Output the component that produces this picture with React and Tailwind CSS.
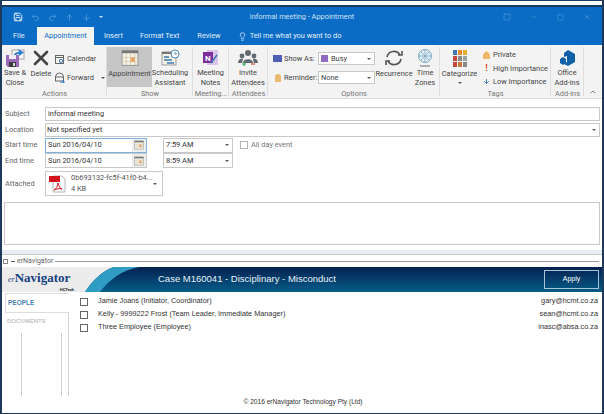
// Outlook appointment window with the erNavigator pane underneath
import { ChevronUp, Minus, Square, X, Lightbulb, ArrowUp, ArrowDown, Undo2, Redo2, Save } from "lucide-react";

function Caret({ className = "" }) {
  return <span className={"inline-block shrink-0 w-0 h-0 border-x-[2px] border-t-[2px] border-x-transparent border-t-[#555] " + className} />;
}

function Group({ width, label, children }) {
  return (
    <div className="flex flex-col shrink-0 h-full relative" style={{ width }}>
      <div className="h-[40px] flex">{children}</div>
      <div className="mt-[2px] h-[10px] text-[7.4px] leading-[10px] text-[#777] text-center whitespace-nowrap">{label}</div>
      <span className="absolute right-0 top-0 bottom-[2px] w-px bg-[#dedede]" />
    </div>
  );
}

function BigButton({ icon, lines, active, width }) {
  return (
    <div className={"flex flex-col items-center shrink-0 text-[7.4px] leading-[9.5px] text-[#444] text-center " + (active ? "bg-[#c6c6c6]" : "")} style={{ width }}>
      <div className="h-[22px] flex items-center justify-center">{icon}</div>
      <div className="whitespace-nowrap">
        {lines.map((l) => <div key={l}>{l}</div>)}
      </div>
    </div>
  );
}

function SaveIcon() {
  return (
    <svg width="20" height="20" viewBox="0 0 20 20">
      <rect x="7" y="2" width="12" height="9" fill="#f7f7f7" stroke="#a5a5a5" />
      <path d="M8 9 C9 5 11 4 14 4 L13 1 L19 4.5 L14 8 L14 6 C12 6 10 7 8 9Z" fill="#2b7cd3" />
      <path d="M1 7h13v12H3l-2-2z" fill="#9a6ab8" />
      <rect x="4" y="7" width="7" height="4" fill="#f3eef7" />
      <rect x="4" y="14" width="7" height="5" fill="#3c3c3c" />
      <rect x="8" y="15" width="2" height="3" fill="#ddd" />
    </svg>
  );
}

function CalendarIcon({ size = 17 }) {
  return (
    <svg width={size} height={size} viewBox="0 0 17 17" className="shrink-0">
      <rect x="1" y="1.5" width="15" height="14" fill="#f5f2e8" stroke="#9a9a9a" />
      <rect x="1" y="1.5" width="15" height="2.5" fill="#777" />
      <path d="M1 8h15M1 12h15M5 4v11M9 4v11M13 4v11" stroke="#d6c9a8" strokeWidth=".8" />
      <rect x="9" y="8" width="4" height="4" fill="#e8a06a" />
    </svg>
  );
}

function SmallCalendar() {
  return (
    <svg width="10" height="10" viewBox="0 0 10 10" className="shrink-0" fill="none" stroke="#666">
      <rect x=".5" y="1.5" width="8" height="8" />
      <path d="M.5 3.5h8" />
      <circle cx="6" cy="7" r="1.6" stroke="#3d7ab5" />
    </svg>
  );
}

function ForwardIcon() {
  return (
    <svg width="10" height="11" viewBox="0 0 10 11" className="shrink-0" fill="none" stroke="#666">
      <path d="M.5 5a4 4 0 0 1 8 0" />
      <rect x=".5" y="5" width="8" height="4" />
      <path d="M5 10h4M7.5 8.5 9.5 10l-2 1" stroke="#2b7cd3" />
    </svg>
  );
}

function SchedulingIcon() {
  return (
    <svg width="19" height="17" viewBox="0 0 19 17">
      <rect x="1" y="3" width="14" height="13" fill="#f7f2e6" stroke="#9a9a9a" />
      <rect x="1" y="3" width="14" height="2" fill="#777" />
      <path d="M3 8h5M3 11h8M6 14h7" stroke="#3d7ab5" strokeWidth="1.4" />
      <circle cx="14" cy="5" r="4" fill="#fff" stroke="#4a86b8" />
      <path d="M14 3v2h2" stroke="#4a86b8" fill="none" />
    </svg>
  );
}

function PdfIcon() {
  return (
    <svg width="17" height="18" viewBox="0 0 17 18" className="shrink-0">
      <path d="M4 1h9l3 3v13H4z" fill="#fff" stroke="#b5b5b5" />
      <rect x="0" y="1" width="11" height="6" fill="#d2141c" />
      <path d="M9 8c0 3-2 6-4 7 2-1 6-2 8-1-2 0-3-3-4-6z" fill="none" stroke="#d2141c" />
    </svg>
  );
}

function FormRow({ label, children, className = "" }) {
  return (
    <div className={"flex items-center " + className}>
      <div className="w-[43px] pl-[3px] shrink-0 text-[7.4px] text-[#666]">{label}</div>
      {children}
    </div>
  );
}

function DateField({ active }) {
  return (
    <div className={"w-[102px] h-[15px] flex items-center justify-between border pl-[2px] text-[7.4px] text-[#333] " + (active ? "border-[#7fb2df]" : "border-[#c8c8c8]")}>
      Sun 2016/04/10
      <div className="h-full flex items-center px-[2px] bg-[#eeeeee]"><CalendarIcon size={10} /></div>
    </div>
  );
}

function TimeField({ value }) {
  return (
    <div className="ml-[16px] w-[70px] h-[15px] flex items-center justify-between border border-[#c8c8c8] pl-[2px] pr-[3px] text-[7.4px] text-[#333]">
      {value}
      <Caret />
    </div>
  );
}

const people = [
  ["Jamie Joans (Initiator, Coordinator)", "gary@hcmt.co.za"],
  ["Kelly - 9999222 Frost (Team Leader, Immediate Manager)", "sean@hcmt.co.za"],
  ["Three Employee (Employee)", "inasc@absa.co.za"],
];

export default function App() {
  return (
    <div className="w-[604px] h-[414px] bg-white overflow-hidden flex flex-col font-['Roboto',sans-serif] border-l-2 border-r-2 border-b border-[#1d3a5a]">
      <div className="h-[7px] shrink-0 border-t border-[#1d3a5a] border-b-2 border-b-[#1d3a5a] bg-white" />

      {/* title bar */}
      <div className="h-[20px] shrink-0 bg-[#0a6cc4] flex items-center">
        <div className="w-[108px] flex items-center gap-[8px] pl-[11px]">
          <Save size={10} className="text-white" />
          <Undo2 size={9} className="text-[#5b9fdb]" />
          <Redo2 size={9} className="text-[#5b9fdb]" />
          <ArrowUp size={9} className="text-[#5b9fdb]" />
          <ArrowDown size={9} className="text-[#5b9fdb]" />
          <Caret className="border-t-[#cfe3f5]" />
        </div>
        <div className="flex-1 text-center text-[7.4px] text-[#cfe3f5] whitespace-nowrap">informal meeting - Appointment</div>
        <div className="w-[108px] pl-[9px] flex items-center gap-[19px] text-[#4f97d8]">
          <Square size={8} />
          <Minus size={8} />
          <Square size={7} />
          <X size={8} />
        </div>
      </div>

      {/* tabs */}
      <div className="h-[18px] shrink-0 bg-[#0a6cc4] flex items-end text-[7.4px] text-[#e4f0fa]">
        <div className="w-[35px] h-full flex items-center pl-[11px]">File</div>
        <div className="w-[57px] h-full flex items-center justify-center bg-[#f3f3f3] text-[#0a6cc4]">Appointment</div>
        <div className="ml-[10px] h-full flex items-center">Insert</div>
        <div className="ml-[17px] h-full flex items-center">Format Text</div>
        <div className="ml-[18px] h-full flex items-center">Review</div>
        <div className="ml-[17px] h-full flex items-center gap-[3px]">
          <Lightbulb size={9} />
          Tell me what you want to do
        </div>
      </div>

      {/* ribbon */}
      <div className="h-[54px] shrink-0 pt-[2px] bg-[#f3f3f3] border-b border-[#dcdcdc] flex items-stretch">
        <Group width={105} label="Actions">
          <BigButton width={26} lines={["Save &", "Close"]} icon={<SaveIcon />} />
          <BigButton width={26} lines={["Delete"]} icon={<X size={24} strokeWidth={2.6} className="text-[#444]" />} />
          <div className="flex flex-col gap-[8px] pt-[6px] pl-[1px] text-[7.4px] leading-[11px] text-[#444]">
            <div className="flex items-center gap-[2px]"><SmallCalendar />Calendar</div>
            <div className="flex items-center gap-[2px] whitespace-nowrap"><ForwardIcon />Forward<Caret className="ml-[5px]" /></div>
          </div>
        </Group>
        <Group width={86} label="Show">
          <BigButton width={45} active lines={["Appointment"]} icon={<CalendarIcon size={18} />} />
          <BigButton width={36} lines={["Scheduling", "Assistant"]} icon={<SchedulingIcon />} />
        </Group>
        <Group width={36} label="Meeting...">
          <BigButton width={35} lines={["Meeting", "Notes"]} icon={
            <svg width="17" height="17" viewBox="0 0 17 17">
              <rect x="5" y="1" width="11" height="15" fill="#d9c4ea" />
              <rect x="1" y="3" width="10" height="11" fill="#7a2f9a" />
              <text x="3" y="12" fontSize="8" fontWeight="700" fill="#fff">N</text>
              <path d="M9 14 15 6" stroke="#3d7ab5" strokeWidth="1.5" />
            </svg>
          } />
        </Group>
        <Group width={39} label="Attendees">
          <BigButton width={38} lines={["Invite", "Attendees"]} icon={
            <svg width="20" height="17" viewBox="0 0 20 17" fill="#5f6b70">
              <circle cx="10" cy="4" r="3" />
              <circle cx="4" cy="7" r="2.4" />
              <circle cx="16" cy="7" r="2.4" />
              <path d="M5 14c0-5 10-5 10 0zM0 14c0-4 3-5 5-4l-1 4zM20 14c0-4-3-5-5-4l1 4z" />
              <path d="M4 15h4M6 13v4" stroke="#3aa655" strokeWidth="1.2" />
              <path d="M13 15h4" stroke="#c8452c" strokeWidth="1.2" />
            </svg>
          } />
        </Group>
        <Group width={172} label="Options">
          <div className="flex flex-col gap-[6px] pt-[5px] pl-[5px] text-[7.4px] text-[#444] w-[108px] shrink-0">
            <div className="flex items-center whitespace-nowrap">
              <span className="w-[9px] h-[7px] mr-[2px] bg-[#4c5fb5]" />
              <span className="w-[34px]">Show As:</span>
              <div className="w-[57px] h-[13px] bg-white border border-[#c8c8c8] flex items-center justify-between pl-[2px] pr-[3px]">
                <span className="flex items-center gap-[3px]"><span className="w-[7px] h-[7px] bg-[#8e6cc4]" />Busy</span>
                <Caret />
              </div>
            </div>
            <div className="flex items-center whitespace-nowrap">
              <span className="w-[6px] h-[8px] ml-[2px] mr-[3px] rounded-t-full bg-[#e9b872]" />
              <span className="w-[34px]">Reminder:</span>
              <div className="w-[57px] h-[13px] bg-white border border-[#c8c8c8] flex items-center justify-between pl-[2px] pr-[3px]">
                None
                <Caret />
              </div>
            </div>
          </div>
          <BigButton width={36} lines={["Recurrence"]} icon={
            <svg width="20" height="18" viewBox="0 0 20 18" fill="none" stroke="#555" strokeWidth="1.6">
              <path d="M3 8a7 7 0 0 1 13-2M17 10a7 7 0 0 1-13 2" />
              <path d="M14 6h4V2M6 12H2v4" />
            </svg>
          } />
          <BigButton width={26} lines={["Time", "Zones"]} icon={
            <svg width="16" height="20" viewBox="0 0 16 20" fill="none" stroke="#7aa6c4">
              <circle cx="8" cy="8" r="6.5" fill="#dfeaf2" />
              <path d="M2 8h12M8 2v12M4 4l8 8M12 4l-8 8" strokeWidth=".7" />
              <path d="M3 18h10" stroke="#999" strokeWidth="1.5" />
            </svg>
          } />
        </Group>
        <Group width={111} label="Tags">
          <div className="w-[39px] flex flex-col items-center text-[7.4px] leading-[9.5px] text-[#444]">
            <svg width="14" height="17" viewBox="0 0 14 17" className="mt-[3px] mb-[2px]">
              <rect x="0" y="0" width="4" height="5" fill="#3e79b5" />
              <rect x="5" y="0" width="4" height="5" fill="#e8892c" />
              <rect x="10" y="0" width="4" height="5" fill="#e8b02c" />
              <rect x="0" y="6" width="4" height="5" fill="#c44a3a" />
              <rect x="5" y="6" width="4" height="5" fill="#8a8a8a" />
              <rect x="10" y="6" width="4" height="5" fill="#9aa5a8" />
              <rect x="0" y="12" width="4" height="5" fill="#c44a3a" />
              <rect x="5" y="12" width="4" height="5" fill="#c47a3a" />
              <rect x="10" y="12" width="4" height="5" fill="#8a8a8a" />
            </svg>
            Categorize
            <Caret className="mt-[3px]" />
          </div>
          <div className="flex flex-col gap-[2.5px] pt-[2px] pl-[4px] text-[7.4px] leading-[11px] text-[#444] whitespace-nowrap">
            <div className="flex items-center gap-[3px]">
              <svg width="7" height="8" viewBox="0 0 7 8" fill="#eeb868"><path d="M0 3h1a2.5 2.5 0 0 1 5 0h1v5H0z" /></svg>
              Private
            </div>
            <div className="flex items-center gap-[3px]"><span className="w-[7px] text-center text-[9px] font-bold text-[#d8492c]">!</span>High Importance</div>
            <div className="flex items-center gap-[3px]"><ArrowDown size={7} strokeWidth={3} className="text-[#2b6cb0]" />Low Importance</div>
          </div>
        </Group>
        <Group width={33} label="Add-ins">
          <BigButton width={32} lines={["Office", "Add-ins"]} icon={
            <svg width="17" height="18" viewBox="0 0 17 18" fill="#0f5fa8">
              <path d="M9 1l7 4v8l-7 4-4-2 3-2V7L5 8V4z" />
              <path d="M1 10l3-2 3 2v4l-3 2-3-2z" />
            </svg>
          } />
        </Group>
        <div className="flex-1 flex items-end justify-center pb-[2px]"><ChevronUp size={8} className="text-[#555]" /></div>
      </div>

      {/* appointment form */}
      <div className="shrink-0 pt-[7px] pr-[2px] flex flex-col">
        <FormRow label="Subject" className="h-[16px]">
          <div className="flex-1 h-[14px] border border-[#c8c8c8] pl-[2px] text-[7.4px] leading-[12px] text-[#333]">informal meeting</div>
        </FormRow>
        <FormRow label="Location" className="h-[15px]">
          <div className="flex-1 h-[14px] border border-[#c8c8c8] pl-[1px] pr-[3px] text-[7.4px] leading-[12px] text-[#333] flex items-center justify-between">
            Not specified yet
            <Caret />
          </div>
        </FormRow>
        <FormRow label="Start time" className="h-[16px]">
          <DateField active />
          <TimeField value="7:59 AM" />
          <span className="ml-[7px] w-[8px] h-[8px] border border-[#b5b5b5]" />
          <span className="ml-[3px] text-[7.4px] text-[#777]">All day event</span>
        </FormRow>
        <FormRow label="End time" className="h-[15px]">
          <DateField />
          <TimeField value="8:59 AM" />
        </FormRow>
        <FormRow label="Attached" className="h-[25px] mt-[3px]">
          <div className="w-[118px] h-[25px] border border-[#c8c8c8] flex items-center pl-[3px] pr-[7px] text-[7.4px] leading-[10.5px] text-[#555]">
            <PdfIcon />
            <div className="ml-[5px] flex-1 whitespace-nowrap">
              <div>0b693132-fc5f-41f0-b4...</div>
              <div>4 KB</div>
            </div>
            <Caret />
          </div>
        </FormRow>
      </div>

      {/* message body */}
      <div className="shrink-0 h-[43px] mt-[6px] ml-[2px] mr-[2px] border border-[#c8c8c8]" />

      {/* splitter */}
      <div className="shrink-0 h-[5px] mt-[5px] bg-[#e6ecf1] border-b border-[#c4ccd2]" />

      {/* erNavigator pane */}
      <div className="shrink-0 h-[12px] flex items-center pl-[1px] pr-[3px] text-[7px] text-[#666]">
        <span className="w-[5px] h-[5px] border border-[#888] mr-[3px]" />
        <span className="w-[4px] h-px bg-[#666] mr-[2px]" />
        erNavigator
        <span className="flex-1 h-px bg-[#999] ml-[2px]" />
      </div>
      <div className="relative shrink-0 h-[25px] flex items-stretch bg-gradient-to-b from-[#04214f] to-[#075d8a]">
        {/* swoosh behind the logo */}
        <svg width="170" height="25" viewBox="0 0 170 25" className="absolute left-0 top-0">
          <path d="M0 0H112C100 4 90 14 83 25H0Z" fill="#ececec" />
          <path d="M112 0H138C120 3 108 12 98 25H83C90 14 100 4 112 0Z" fill="#2f9cc4" />
        </svg>
        <div className="relative w-[84px] pl-[6px] pt-[4px] flex flex-col">
          <div className="text-[13px] leading-[13px] font-bold text-[#17417f] whitespace-nowrap font-['Liberation_Serif',serif]"><span className="text-[8px] italic font-normal">er</span>Navigator</div>
          <div className="mt-[1px] text-right pr-[12px] text-[4px] leading-[5px] font-bold text-[#222]">HCTech</div>
        </div>
        <div className="relative flex-1 pl-[72px] flex items-center text-[9.5px] text-[#e8f1f7] font-['Liberation_Sans',sans-serif] whitespace-nowrap">Case M160041 - Disciplinary - Misconduct</div>
        <div className="relative my-[3px] mr-[3px] w-[55px] border border-[#a9c4d6] flex items-center justify-center text-[7px] text-white font-['Liberation_Sans',sans-serif]">Apply</div>
      </div>
      <div className="flex-1 flex font-['Liberation_Sans',sans-serif] text-[7.3px] text-[#333] min-h-0">
        <div className="w-[67px] shrink-0 flex flex-col pb-[17px] relative">
          <div className="ml-[3px] mt-[1px] h-[20px] border-y border-l border-r-0 border-[#ddd] pl-[2px] flex items-center text-[6.5px] font-bold text-[#4a7fb5]">PEOPLE</div>
          <div className="flex-1 border-r border-[#d0d0d0] flex flex-col">
            <div className="ml-[5px] h-[15px] pt-[2px] flex items-center text-[6px] font-bold text-[#c4c4c4]">DOCUMENTS</div>
            <div className="flex-1 mt-[5px] ml-[19px] mr-[6px] border-x border-[#d0d0d0]" />
          </div>
        </div>
        <div className="flex-1 pl-[11px] pr-[4px] pt-[3px] min-w-0">
          {people.map(([name, mail]) => (
            <div key={mail} className="h-[13px] flex items-center">
              <span className="w-[8px] h-[8px] border border-[#666] mr-[10px]" />
              <span className="flex-1">{name}</span>
              <span>{mail}</span>
            </div>
          ))}
        </div>
      </div>
      <div className="shrink-0 h-[16px] pb-[7px] -mt-[16px] flex items-center justify-center pl-[2px] text-[6.6px] text-[#333] font-['Liberation_Sans',sans-serif]">
        © 2016 erNavigator Technology Pty (Ltd)
      </div>
    </div>
  );
}
